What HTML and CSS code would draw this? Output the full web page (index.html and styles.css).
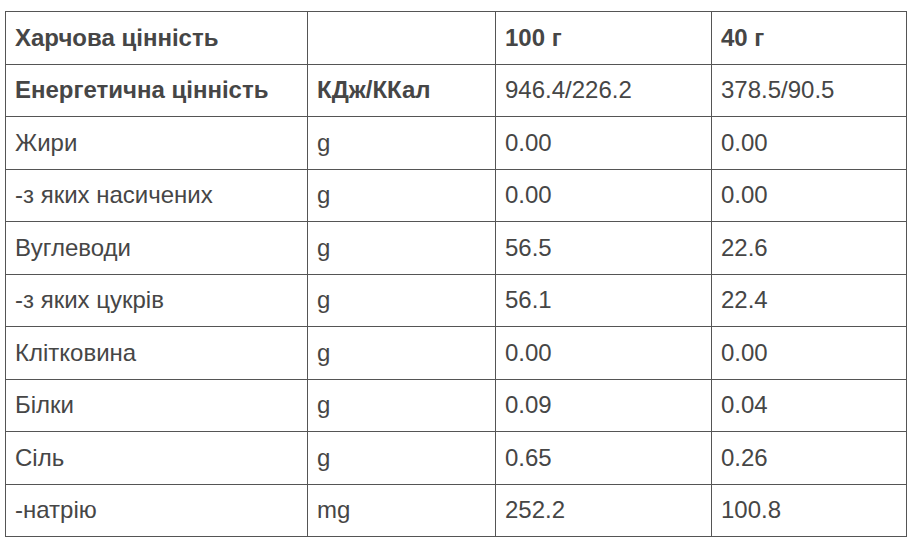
FILE: index.html
```html
<!DOCTYPE html>
<html lang="uk">
<head>
<meta charset="utf-8">
<link rel="stylesheet" href="styles.css">
</head>
<body>
<table class="nutrition">
  <colgroup>
    <col class="c1"><col class="c2"><col class="c3"><col class="c4">
  </colgroup>
  <tr class="bold"><td>Харчова цінність</td><td></td><td>100 г</td><td>40 г</td></tr>
  <tr><td class="b">Енергетична цінність</td><td class="b">КДж/ККал</td><td>946.4/226.2</td><td>378.5/90.5</td></tr>
  <tr><td>Жири</td><td>g</td><td>0.00</td><td>0.00</td></tr>
  <tr><td>-з яких насичених</td><td>g</td><td>0.00</td><td>0.00</td></tr>
  <tr><td>Вуглеводи</td><td>g</td><td>56.5</td><td>22.6</td></tr>
  <tr><td>-з яких цукрів</td><td>g</td><td>56.1</td><td>22.4</td></tr>
  <tr><td>Клітковина</td><td>g</td><td>0.00</td><td>0.00</td></tr>
  <tr><td>Білки</td><td>g</td><td>0.09</td><td>0.04</td></tr>
  <tr><td>Сіль</td><td>g</td><td>0.65</td><td>0.26</td></tr>
  <tr><td>-натрію</td><td>mg</td><td>252.2</td><td>100.8</td></tr>
</table>
</body>
</html>
```

FILE: styles.css
```css
html, body {
  margin: 0;
  padding: 0;
  background: #ffffff;
}
body {
  font-family: "Liberation Sans", Arial, sans-serif;
  color: #464646;
}
.nutrition {
  border-collapse: collapse;
  margin: 11px 0 0 5px;
  table-layout: fixed;
  width: 901px;
  font-size: 24px;
}
.c1 { width: 302px; }
.c2 { width: 188px; }
.c3 { width: 216px; }
.c4 { width: 195px; }
.nutrition td {
  border: 1px solid #555555;
  height: 52.5px;
  padding: 0 9px;
  box-sizing: border-box;
  vertical-align: middle;
  white-space: nowrap;
}
.bold td, .nutrition td.b {
  font-weight: bold;
}
```
